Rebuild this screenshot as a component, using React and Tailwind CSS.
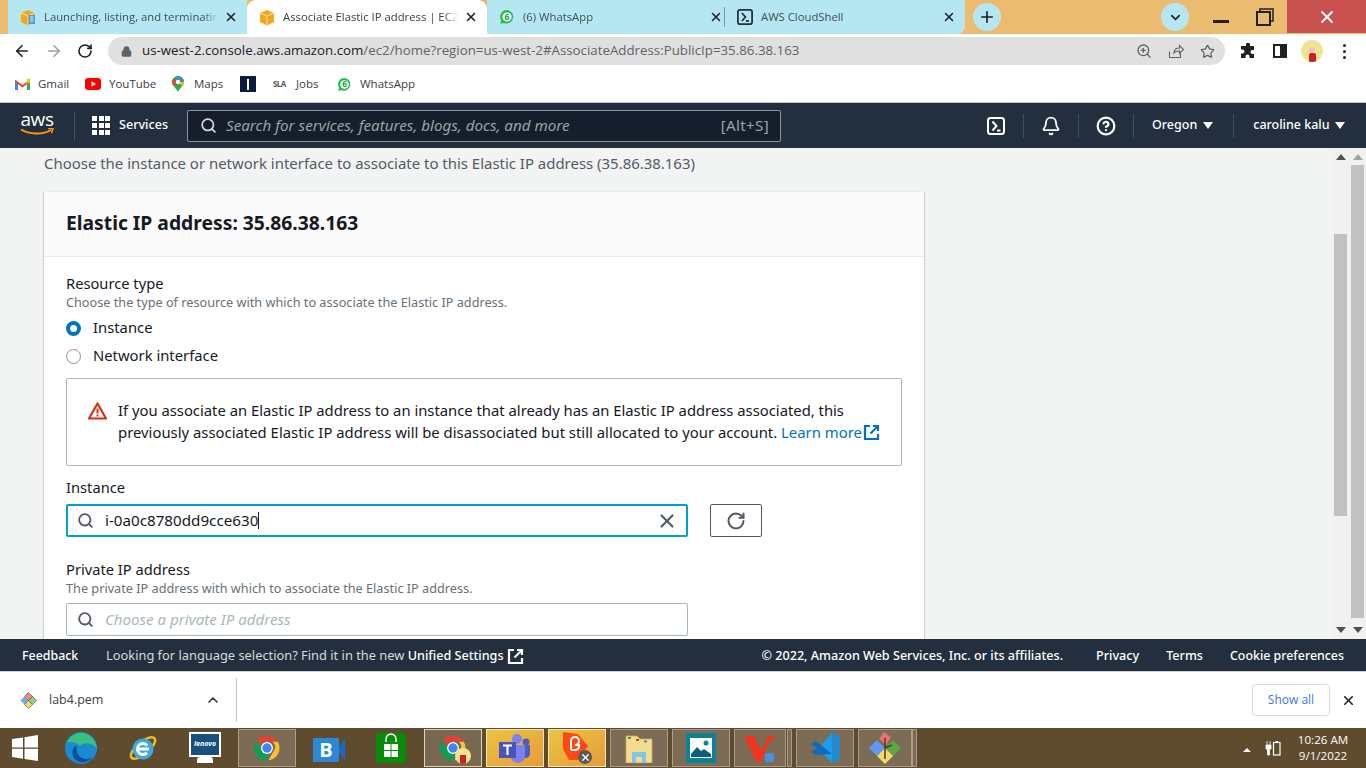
import React from 'react';
import { ArrowLeft, ArrowRight, RotateCw, Lock, X, Plus, ChevronDown, ChevronUp, Search, ZoomIn, Star, Bell, CircleHelp } from 'lucide-react';

const Chrome = ({ size = 30 }) => (
    <svg width={size} height={size} viewBox="0 0 48 48">
        <path d="M24 4a20 20 0 0 1 17.3 10H24a10 10 0 0 0-9.4 6.6L7.6 11.8A20 20 0 0 1 24 4z" fill="#db4437" />
        <path d="M41.3 14A20 20 0 0 1 26 43.9l8.6-14.9A10 10 0 0 0 33 14z" fill="#fbc02d" />
        <path d="M26 43.9A20 20 0 0 1 7.6 11.8l8.6 14.9a10 10 0 0 0 9 7.2z" fill="#0f9d58" />
        <circle cx="24" cy="24" r="9.5" fill="#fff" />
        <circle cx="24" cy="24" r="7.5" fill="#4285f4" />
    </svg>
);

const WhatsAppIcon = ({ size = 16 }) => (
    <svg width={size} height={size} viewBox="0 0 16 16">
        <path d="M8 1a6.8 6.8 0 0 0-5.8 10.4L1.4 15l3.5-.9A6.8 6.8 0 1 0 8 1z" fill="#1fc24f" />
        <circle cx="8" cy="8" r="4.6" fill="#fff" />
        <text x="8" y="11" textAnchor="middle" fontSize="8.5" fontWeight="700" fill="#1a9c40" fontFamily="Open Sans, sans-serif">6</text>
    </svg>
);

const AwsBox = ({ doc }) => (
    <svg width="16" height="17" viewBox="0 0 16 17">
        <path d="M8 1l7 3v9l-7 3.5L1 13V4z" fill="#f3a81c" />
        <path d="M1 4l7 3 7-3M8 7v9.5" fill="none" stroke="#fff" strokeWidth=".7" />
        {doc && <rect x="8.5" y="6" width="6.5" height="9" fill="#4b9fd5" />}
        {doc && <path d="M10 8h3.5M10 10h3.5M10 12h3.5" stroke="#fff" strokeWidth=".8" />}
    </svg>
);

const ShellIcon = ({ size = 18, color = '#232f3e' }) => (
    <svg width={size} height={size} viewBox="0 0 18 18">
        <rect x="1" y="1" width="16" height="16" rx="2.5" fill="none" stroke={color} strokeWidth="2" />
        <path d="M5.5 4.5L9.5 9l-4 4.5" fill="none" stroke={color} strokeWidth="2" />
        <path d="M10 13.5h3.5" stroke={color} strokeWidth="2" />
    </svg>
);

const ExternalIcon = ({ className }) => (
    <svg className={className} width="17" height="17" viewBox="0 0 17 17">
        <path d="M7 2H2v13h13v-5" fill="none" stroke="currentColor" strokeWidth="2.2" />
        <path d="M10 2h5v5M15 2L7.5 9.5" fill="none" stroke="currentColor" strokeWidth="2.2" />
    </svg>
);

const Tab = ({ icon, title, active, width, divider }) => (
    <div className={`${width} h-[34px] shrink-0 flex items-center pl-[12px] pr-[9px] ${active ? 'bg-white rounded-t-[9px]' : 'bg-[#b5e7f2]'}`}>
        <div className="w-[16px] h-[17px] flex items-center justify-center shrink-0">{icon}</div>
        <span className={`ml-[8px] flex-1 overflow-hidden whitespace-nowrap text-[11.3px] [mask-image:linear-gradient(to_right,black_92%,transparent)] ${active ? 'text-[#3c4043]' : 'text-[#3f5055]'}`}>{title}</span>
        <X className="ml-[6px] shrink-0 text-[#202124]" size={14} strokeWidth={2.6} />
        {divider && <div className="ml-[1px] -mr-[9px] w-px h-[20px] bg-[#7d9aa1]" />}
    </div>
);

const Bookmark = ({ icon, label, width }) => (
    <div className={`${width} flex items-center shrink-0`}>
        {icon}
        {label && <span className="text-[11.5px] text-[#3c4043] whitespace-nowrap">{label}</span>}
    </div>
);

const TaskSlot = ({ children, kind = 'none', width = 'w-[58px]' }) => {
    const styles = {
        none: '',
        open: 'bg-[#7c6c56] border border-[#a99c88]',
        bright: 'bg-[#77684f] border border-[#dcd5c8]',
        hot: 'bg-gradient-to-br from-[#e8c53f] to-[#e89a3c] border border-[#f4e6bd]',
    };
    return <div className={`${width} h-[38px] mt-px flex items-center justify-center shrink-0 ${styles[kind]}`}>{children}</div>;
};

const ScrollBar = ({ topSpace, thumb, topArrow }) => (
    <div className="w-[13px] h-full flex flex-col items-center">
        <div className={`w-0 h-0 border-x-[5px] border-x-transparent border-b-[6px] mt-[6px] ${topArrow}`} />
        <div className={`${topSpace} w-0`} />
        <div className={`${thumb} w-[13px] bg-[#c1c1c1]`} />
        <div className="flex-1" />
        <div className="w-0 h-0 border-x-[5px] border-x-transparent border-t-[6px] border-t-[#505050] mb-[6px]" />
    </div>
);

const AwsField = ({ children, className }) => (
    <div className={`w-[622px] h-[33px] flex items-center bg-white rounded-[2px] ${className}`}>{children}</div>
);

const App = () => {
    return (
        <div className="w-[1366px] h-[768px] flex flex-col overflow-hidden bg-white font-['Noto_Sans',sans-serif]">
            {/* Tab strip */}
            <div className="h-[34px] flex bg-[#ebbb6f] shrink-0 font-['Open_Sans',sans-serif]">
                <div className="w-[8px] shrink-0" />
                <Tab width="w-[239px]" icon={<AwsBox doc />} title="Launching, listing, and terminating" />
                <Tab width="w-[240px]" active icon={<AwsBox />} title="Associate Elastic IP address | EC2" />
                <Tab width="w-[238px]" divider icon={<WhatsAppIcon />} title="(6) WhatsApp" />
                <div className="w-[240px] h-[34px] shrink-0 flex items-center pl-[12px] pr-[9px] bg-[#b5e7f2] rounded-br-[8px]">
                    <ShellIcon size={16} />
                    <span className="ml-[8px] flex-1 text-[11.3px] text-[#3f5055] whitespace-nowrap">AWS CloudShell</span>
                    <X size={14} strokeWidth={2.6} className="text-[#202124]" />
                </div>
                <div className="ml-[8px] mt-[3px] w-[28px] h-[28px] shrink-0 rounded-full bg-[#b5e7f2] flex items-center justify-center">
                    <Plus size={18} strokeWidth={2.2} className="text-[#202124]" />
                </div>
                <div className="ml-[160px] mt-[3px] w-[28px] h-[28px] shrink-0 rounded-full bg-[#b5e7f2] flex items-center justify-center">
                    <ChevronDown size={15} strokeWidth={2.6} className="text-[#202124]" />
                </div>
                <div className="w-[16px] h-[3px] mt-[20px] bg-[#202124] ml-[24px] shrink-0" />
                <svg className="ml-[27px] mt-[8px] shrink-0" width="18" height="18" viewBox="0 0 18 18">
                    <path d="M4 4V1h13v12h-3" fill="none" stroke="#202124" strokeWidth="1.5" />
                    <rect x="1" y="4" width="13" height="13" fill="none" stroke="#202124" strokeWidth="2" />
                </svg>
                <div className="ml-[13px] w-[79px] h-[33px] shrink-0 bg-[#c9514f] flex items-center justify-center">
                    <X size={20} strokeWidth={2.2} className="text-white" />
                </div>
            </div>

            {/* Address bar */}
            <div className="h-[34px] flex items-center bg-white shrink-0 font-['Open_Sans',sans-serif]">
                <ArrowLeft className="ml-[13px] text-[#202124]" size={18} strokeWidth={2.2} />
                <ArrowRight className="ml-[14px] text-[#9aa0a6]" size={18} strokeWidth={2.2} />
                <RotateCw className="ml-[14px] text-[#202124]" size={16} strokeWidth={2.4} />
                <div className="ml-[15px] w-[1117px] h-[28px] rounded-full bg-[#e0e0e0] flex items-center">
                    <Lock className="ml-[13px] text-[#5f6368]" size={11} strokeWidth={3} fill="#5f6368" />
                    <span className="ml-[10px] text-[13.3px] text-[#5f6368] whitespace-nowrap flex-1">
                        <span className="text-[#202124]">us-west-2.console.aws.amazon.com</span>/ec2/home?region=us-west-2#AssociateAddress:PublicIp=35.86.38.163
                    </span>
                    <ZoomIn className="text-[#5f6368]" size={16} />
                    <svg className="ml-[16px]" width="16" height="16" viewBox="0 0 16 16">
                        <path d="M1.5 8.5v6h11v-4M6 10c0-3.5 2-5 5.5-5V2.5l4 4-4 4V8C9 8 7 8.5 6 10z" fill="none" stroke="#5f6368" strokeWidth="1.1" />
                    </svg>
                    <Star className="ml-[16px] mr-[10px] text-[#5f6368]" size={15} strokeWidth={2} />
                </div>
                <svg className="ml-[15px]" width="16" height="16" viewBox="0 0 16 16">
                    <path d="M6 1.5a2 2 0 0 1 4 0V3h4v4h-1.5a2 2 0 0 0 0 4H14v4H9.5v-1.5a2 2 0 0 0-4 0V15H1v-4.5h1.5a2 2 0 0 0 0-4H1V3h5z" fill="#202124" />
                </svg>
                <div className="ml-[17px] w-[14px] h-[14px] border-2 border-[#202124] flex justify-end">
                    <div className="w-[5px] h-full bg-[#202124]" />
                </div>
                <div className="ml-[14px] w-[22px] h-[22px] rounded-full bg-[#efe58f] flex flex-col items-center justify-end overflow-hidden">
                    <div className="w-[6px] h-[6px] rounded-full bg-[#e8c4c4]" />
                    <div className="w-[7px] h-[9px] bg-[#c9202a] rounded-t-[2px]" />
                </div>
                <div className="ml-[20px] flex flex-col gap-[3px]">
                    <div className="w-[3px] h-[3px] rounded-full bg-[#202124]" />
                    <div className="w-[3px] h-[3px] rounded-full bg-[#202124]" />
                    <div className="w-[3px] h-[3px] rounded-full bg-[#202124]" />
                </div>
            </div>

            {/* Bookmarks */}
            <div className="h-[35px] flex items-center pl-[15px] pb-[2px] bg-white border-b border-[#c4c4c4] shrink-0 font-['Open_Sans',sans-serif]">
                <Bookmark width="w-[70px]" label="Gmail" icon={
                    <svg className="mr-[8px]" width="15" height="12" viewBox="0 0 15 12">
                        <path d="M0 2v10h3V4.5z" fill="#4285f4" />
                        <path d="M15 2v10h-3V4.5z" fill="#34a853" />
                        <path d="M0 1.5l7.5 5.5L15 1.5V4L7.5 9.5 0 4z" fill="#ea4335" />
                        <path d="M12 1l3-.5V4l-3 2.2z" fill="#fbbc04" />
                    </svg>
                } />
                <Bookmark width="w-[87px]" label="YouTube" icon={
                    <svg className="mr-[8px]" width="16" height="12" viewBox="0 0 16 12">
                        <rect width="16" height="12" rx="3" fill="#f00" />
                        <path d="M6.5 3.2v5.6L11 6z" fill="#fff" />
                    </svg>
                } />
                <Bookmark width="w-[68px]" label="Maps" icon={
                    <svg className="mr-[10px]" width="12" height="16" viewBox="0 0 12 16">
                        <path d="M6 0a6 6 0 0 1 6 6c0 3.5-4 6-6 10-2-4-6-6.5-6-10a6 6 0 0 1 6-6z" fill="#34a853" />
                        <path d="M1 2.7L6 6 2 10C.8 8.5 0 7.3 0 6c0-1.3.4-2.4 1-3.3z" fill="#ea4335" />
                        <path d="M6 0a6 6 0 0 1 6 6L8 4 4 .4C4.6.1 5.3 0 6 0z" fill="#4285f4" />
                        <path d="M12 6c0 1.5-1 3-2 4L6 6z" fill="#fbbc04" />
                        <circle cx="6" cy="6" r="2.2" fill="#fff" />
                    </svg>
                } />
                <Bookmark width="w-[33px]" icon={
                    <div className="w-[16px] h-[16px] bg-[#0b1b3a] flex items-center justify-center">
                        <div className="w-[2px] h-[11px] bg-white" />
                    </div>
                } />
                <Bookmark width="w-[64px]" label="Jobs" icon={
                    <span className="w-[23px] text-[8px] font-bold text-[#555] tracking-[-0.08em]">SLA</span>
                } />
                <Bookmark width="w-[90px]" label="WhatsApp" icon={
                    <span className="mr-[8px] flex"><WhatsAppIcon size={15} /></span>
                } />
            </div>

            {/* AWS console nav */}
            <div className="h-[45px] flex items-center bg-[#232f3e] text-white shrink-0">
                <div className="ml-[20px] w-[34px] flex flex-col items-center">
                    <span className="text-[19px] leading-[16px] font-['Open_Sans',sans-serif] tracking-[-0.02em] -mt-[5px]">aws</span>
                    <svg className="mt-[1px]" width="34" height="8" viewBox="0 0 34 8">
                        <path d="M1 1.5c8 5 22 5.5 30 .5" fill="none" stroke="#f90" strokeWidth="2" />
                        <path d="M28 .5h5l-1.5 4.5" fill="none" stroke="#f90" strokeWidth="1.5" />
                    </svg>
                </div>
                <div className="ml-[20px] w-px h-[30px] bg-[#414d5c]" />
                <div className="ml-[17px] w-[18px] grid grid-cols-3 gap-[2px]">
                    {[0, 1, 2, 3, 4, 5, 6, 7, 8].map((i) => <div key={i} className="w-[5px] h-[5px] bg-white" />)}
                </div>
                <span className="ml-[9px] w-[68px] text-[12.6px] font-medium">Services</span>
                <div className="w-[594px] h-[32px] flex items-center bg-[#161e2d] border border-[#879596] rounded-[2px]">
                    <Search className="ml-[12px] text-[#d5dbdb]" size={17} strokeWidth={2.4} />
                    <span className="ml-[9px] flex-1 text-[15.2px] italic text-[#95a5a6] whitespace-nowrap">Search for services, features, blogs, docs, and more</span>
                    <span className="mr-[11px] text-[15.2px] tracking-[0.02em] text-[#95a5a6]">[Alt+S]</span>
                </div>
                <div className="ml-[206px] flex"><ShellIcon color="#fff" /></div>
                <div className="ml-[18px] w-px h-[24px] bg-[#414d5c]" />
                <Bell className="ml-[17px]" size={20} strokeWidth={2.2} />
                <div className="ml-[17px] w-px h-[24px] bg-[#414d5c]" />
                <CircleHelp className="ml-[17px]" size={20} strokeWidth={2.6} />
                <div className="ml-[17px] w-px h-[24px] bg-[#414d5c]" />
                <span className="ml-[18px] text-[12.5px] font-medium">Oregon</span>
                <div className="ml-[6px] w-0 h-0 border-x-[5px] border-x-transparent border-t-[7px] border-t-white" />
                <div className="ml-[20px] w-px h-[24px] bg-[#414d5c]" />
                <span className="ml-[19px] text-[12.5px] font-medium whitespace-nowrap">caroline kalu</span>
                <div className="ml-[5px] w-0 h-0 border-x-[5px] border-x-transparent border-t-[7px] border-t-white" />
            </div>

            {/* Console content + scrollbars */}
            <div className="h-[491px] flex bg-[#f2f3f3] shrink-0 overflow-hidden">
                <div className="w-[1332px] shrink-0 pl-[44px] pt-[5px] overflow-hidden">
                    <p className="h-[20px] leading-[20px] text-[14.95px] text-[#545b64] whitespace-nowrap">Choose the instance or network interface to associate to this Elastic IP address (35.86.38.163)</p>
                    <div className="mt-[18px] w-[880px] bg-white rounded-[1px] border-t border-[#eaeded] shadow-[0_1px_1px_0_rgba(0,28,36,0.3),1px_1px_1px_0_rgba(0,28,36,0.15),-1px_1px_1px_0_rgba(0,28,36,0.15)]">
                        <div className="h-[65px] flex items-center px-[22px] pb-[2px] bg-[#fafafa] border-b border-[#eaeded]">
                            <h2 className="text-[19.3px] font-bold text-[#16191f]">Elastic IP address: 35.86.38.163</h2>
                        </div>
                        <div className="px-[22px] pt-[16px] pb-[20px] w-[880px]">
                            <div className="h-[20px] leading-[20px] text-[14.7px] text-[#16191f]">Resource type</div>
                            <div className="h-[16px] leading-[16px] text-[12.7px] text-[#687078] mt-[1px]">Choose the type of resource with which to associate the Elastic IP address.</div>
                            <div className="mt-[4px] h-[28px] flex items-center text-[14.8px] leading-[20px] text-[#16191f]">
                                <div className="w-[15px] h-[15px] rounded-full border-[4px] border-[#0073bb] bg-white" />
                                <span className="ml-[12px] -mt-[2px]">Instance</span>
                            </div>
                            <div className="h-[28px] flex items-center text-[14.8px] leading-[20px] text-[#16191f]">
                                <div className="w-[15px] h-[15px] rounded-full border border-[#879596] bg-white" />
                                <span className="ml-[12px] -mt-[2px]">Network interface</span>
                            </div>
                            <div className="mt-[8px] h-[88px] w-[836px] flex items-start pl-[21px] pt-[20px] border border-[#aab7b8] rounded-[2px]">
                                <svg className="mt-[3px] shrink-0" width="19" height="18" viewBox="0 0 19 18">
                                    <path d="M9.5 1.5L18 16.5H1z" fill="none" stroke="#d13212" strokeWidth="2.2" strokeLinejoin="round" />
                                    <path d="M9.5 6.5v5M9.5 12.5v2" stroke="#d13212" strokeWidth="2" />
                                </svg>
                                <p className="ml-[11px] text-[14.8px] leading-[22px] text-[#16191f] whitespace-nowrap">
                                    If you associate an Elastic IP address to an instance that already has an Elastic IP address associated, this<br />
                                    <span className="text-[14.86px]">previously associated Elastic IP address will be disassociated but still allocated to your account. <span className="text-[#0073bb]">Learn more</span></span>
                                    <ExternalIcon className="inline-block -mt-[3px] ml-px text-[#0073bb]" />
                                </p>
                            </div>
                            <div className="mt-[11px] h-[20px] leading-[20px] text-[14.7px] text-[#16191f]">Instance</div>
                            <div className="mt-[7px] flex">
                                <AwsField className="border-2 border-[#00a1c9]">
                                    <Search className="ml-[9px] text-[#545b64]" size={17} strokeWidth={2.6} />
                                    <span className="ml-[11px] text-[15.2px] text-[#16191f]">i-0a0c8780dd9cce630</span>
                                    <div className="w-px h-[17px] bg-[#16191f]" />
                                    <div className="flex-1" />
                                    <X className="mr-[8px] text-[#545b64]" size={22} strokeWidth={2.4} />
                                </AwsField>
                                <div className="ml-[22px] w-[52px] h-[33px] flex items-center justify-center border border-[#545b64] rounded-[2px]">
                                    <RotateCw className="text-[#545b64]" size={20} strokeWidth={2.4} />
                                </div>
                            </div>
                            <div className="mt-[22px] h-[20px] leading-[20px] text-[14.7px] text-[#16191f]">Private IP address</div>
                            <div className="h-[16px] leading-[16px] text-[12.7px] text-[#687078] mt-[1px]">The private IP address with which to associate the Elastic IP address.</div>
                            <AwsField className="mt-[7px] border border-[#aab7b8]">
                                <Search className="ml-[10px] text-[#545b64]" size={17} strokeWidth={2.6} />
                                <span className="ml-[11px] text-[15.1px] italic text-[#aab7b8]">Choose a private IP address</span>
                            </AwsField>
                        </div>
                    </div>
                </div>
                <div className="flex-1 flex bg-[#f1f1f1] pl-[2px] gap-[4px]">
                    <ScrollBar topSpace="h-[74px]" thumb="h-[282px]" topArrow="border-b-[#505050]" />
                    <ScrollBar topSpace="h-[5px]" thumb="h-[453px]" topArrow="border-b-[#a3a3a3]" />
                </div>
            </div>

            {/* Console footer */}
            <div className="h-[32px] pt-[2px] flex items-center bg-[#232f3e] text-[12.6px] text-white shrink-0 whitespace-nowrap">
                <span className="ml-[22px] w-[84px] text-[12.4px] font-medium">Feedback</span>
                <span className="text-[12.85px] text-[#d5dbdb]">Looking for language selection? Find it in the new <span className="text-[12.6px] text-white font-medium">Unified Settings</span></span>
                <ExternalIcon className="ml-[3px]" />
                <span className="ml-[238px] font-medium">© 2022, Amazon Web Services, Inc. or its affiliates.</span>
                <span className="ml-[33px] font-medium">Privacy</span>
                <span className="ml-[27px] font-medium">Terms</span>
                <span className="ml-[27px] text-[12.4px] font-medium">Cookie preferences</span>
            </div>

            {/* Downloads bar */}
            <div className="h-[57px] flex items-center bg-white border-t border-[#d0d0d0] shrink-0 font-['Open_Sans',sans-serif]">
                <svg className="ml-[20px]" width="17" height="17" viewBox="0 0 17 17">
                    <path d="M8.5.5l4 4-4 4-4-4z" fill="#f08a8a" stroke="#333" strokeWidth=".5" />
                    <path d="M12.5 4.5l4 4-4 4-4-4z" fill="#8ed27a" stroke="#333" strokeWidth=".5" />
                    <path d="M4.5 4.5l4 4-4 4-4-4z" fill="#6ea8f5" />
                    <path d="M8.5 8.5l4 4-4 4-4-4z" fill="#f6d866" stroke="#333" strokeWidth=".5" />
                </svg>
                <span className="ml-[12px] w-[156px] text-[12.5px] text-[#3c4043]">lab4.pem</span>
                <ChevronUp size={16} strokeWidth={2.6} className="text-[#3c4043]" />
                <div className="ml-[15px] w-px h-[44px] bg-[#c4c4c4]" />
                <div className="flex-1" />
                <div className="w-[78px] h-[32px] flex items-center justify-center border border-[#dadce0] rounded-[4px] text-[12px] text-[#3b78e7]">Show all</div>
                <X className="ml-[11px] mr-[10px] text-[#202124]" size={15} strokeWidth={2.6} />
            </div>

            {/* Windows taskbar */}
            <div className="h-[40px] flex bg-[#5f4b2d] shrink-0">
                <svg className="ml-[12px] mt-[7px] shrink-0" width="26" height="26" viewBox="0 0 26 26">
                    <path d="M0 4l11-1.5v10H0zM12.5 2.200L26 0v12.5H12.5zM0 13.800h11v10L0 22zM12.5 13.800H26V26l-13.500-2z" fill="#fff" />
                </svg>
                <svg className="ml-[27px] mt-[4px] shrink-0" width="32" height="32" viewBox="0 0 32 32">
                    <circle cx="16" cy="16" r="16" fill="#1b8bd1" />
                    <path d="M2 10C6 2 14 0 20 1.5c7 2 11 8 12 15-4-5-12-7-17-3-3-3-9-4-13-3.5z" fill="#39c27f" />
                    <path d="M12 14c-2 7 3 13 10 13 2 0 4-.5 6-2-3 4-8 6-13 5-6-1-9-8-7-13 1-2 2-3 4-3z" fill="#0f4f9c" />
                </svg>
                <svg className="ml-[31px] mt-[4px] shrink-0" width="30" height="32" viewBox="0 0 30 32">
                    <ellipse cx="15" cy="16" rx="15" ry="6" transform="rotate(-40 15 16)" fill="none" stroke="#f0bd23" strokeWidth="2.5" />
                    <circle cx="15" cy="17" r="10.5" fill="#3aa9e6" />
                    <rect x="9" y="15.5" width="12" height="3" fill="#fff" />
                    <circle cx="15" cy="17" r="5.5" fill="none" stroke="#fff" strokeWidth="3" strokeDasharray="26 9" strokeDashoffset="-4" />
                </svg>
                <div className="ml-[31px] w-[32px] mt-[4px] flex flex-col items-center shrink-0">
                    <div className="w-[32px] h-[25px] bg-[#15507f] border-[2px] border-white flex items-center justify-center">
                        <span className="text-[7px] italic font-bold text-white font-['Open_Sans',sans-serif]">lenovo</span>
                    </div>
                    <div className="w-[16px] h-[6px] bg-white rounded-t-[3px]" />
                </div>
                <div className="w-[17px] shrink-0" />
                <TaskSlot kind="open"><Chrome /></TaskSlot>
                <div className="ml-[17px] w-[32px] h-[27px] mt-[8px] flex items-center shrink-0">
                    <div className="w-[26px] h-[24px] bg-[#2b88d8] flex items-center justify-center text-white text-[20px] font-bold leading-none font-['Open_Sans',sans-serif]">B</div>
                    <div className="w-[6px] h-[22px] bg-[#1769c2] [clip-path:polygon(0_40%,100%_0,100%_100%,0_60%)]" />
                </div>
                <svg className="ml-[31px] mt-[5px] shrink-0" width="30" height="30" viewBox="0 0 30 30">
                    <rect width="30" height="30" fill="#0a8a0a" />
                    <path d="M10 9V6a5 5 0 0 1 10 0v3" fill="none" stroke="#fff" strokeWidth="1.4" />
                    <path d="M8 11h6.5v6H8zM15.5 11H22v6h-6.5zM8 18h6.5v6H8zM15.5 18H22v6h-6.5z" fill="#fff" />
                </svg>
                <div className="w-[18px] shrink-0" />
                <TaskSlot kind="bright">
                    <div className="relative w-[30px] h-[30px]">
                        <Chrome />
                        <div className="absolute -right-[3px] -bottom-[1px] w-[16px] h-[16px] rounded-full bg-[#efe58f] flex items-end justify-center overflow-hidden">
                            <div className="w-[6px] h-[9px] bg-[#c9202a]" />
                        </div>
                    </div>
                </TaskSlot>
                <div className="w-[4px] shrink-0" />
                <TaskSlot kind="hot">
                    <svg width="32" height="30" viewBox="0 0 32 30">
                        <circle cx="18" cy="6" r="5" fill="#7b83eb" />
                        <circle cx="27" cy="9" r="3.5" fill="#4f5bbd" />
                        <path d="M22 12h9v9a5 5 0 0 1-9 2z" fill="#4f5bbd" />
                        <path d="M10 12h16v11a7 7 0 0 1-14 0z" fill="#7b83eb" />
                        <rect x="0" y="9" width="17" height="16" fill="#4b53bc" />
                        <path d="M4 12.5h9M8.5 12.5V22" stroke="#fff" strokeWidth="2.2" />
                    </svg>
                </TaskSlot>
                <div className="w-[4px] shrink-0" />
                <TaskSlot kind="hot">
                    <div className="relative w-[30px] h-[32px]">
                        <svg width="28" height="28" viewBox="0 0 28 28">
                            <path d="M1 0l15 2 10 12-10 14H7L1 17z" fill="#fb4a14" />
                            <path d="M9 18V9a4 4 0 0 1 8 0 4 4 0 0 1-4 4h4a4 4 0 0 1-4 5H9" fill="none" stroke="#fff" strokeWidth="2" />
                        </svg>
                        <div className="absolute right-0 bottom-0 w-[14px] h-[14px] rounded-full bg-[#5a5a5a] flex items-center justify-center">
                            <X size={11} strokeWidth={3} className="text-white" />
                        </div>
                    </div>
                </TaskSlot>
                <div className="w-[4px] shrink-0" />
                <TaskSlot kind="open">
                    <svg width="28" height="30" viewBox="0 0 28 30">
                        <path d="M1 3h11l3 3h12v24H1z" fill="#f4dc8f" stroke="#c9ad62" strokeWidth=".8" />
                        <rect x="3" y="4" width="3" height="1.8" fill="#1aa53c" />
                        <rect x="11" y="6" width="3" height="1.8" fill="#d13212" />
                        <rect x="19" y="7.5" width="3" height="1.8" fill="#2b88d8" />
                        <path d="M7 30V19h14v11h-4v-6h-6v6z" fill="#7fc4ea" />
                    </svg>
                </TaskSlot>
                <div className="w-[4px] shrink-0" />
                <TaskSlot kind="open">
                    <div className="w-[30px] h-[30px] bg-[#0b8299] flex items-center justify-center">
                        <svg width="22" height="20" viewBox="0 0 22 20">
                            <rect width="22" height="20" fill="#fff" />
                            <path d="M1 16l6-7 4 4 3-2 7 5v3H1z" fill="#0b5f7d" />
                            <circle cx="16" cy="5" r="2.5" fill="#0b8299" />
                        </svg>
                    </div>
                </TaskSlot>
                <div className="w-[4px] shrink-0" />
                <TaskSlot kind="open" width="w-[52px]">
                    <svg width="32" height="28" viewBox="0 0 32 28">
                        <path d="M0 2h11l5 14 4-14h12l-8 8-7 18h-5z" fill="#f0341f" />
                        <path d="M11 2h13l-4 9-4 5z" fill="#7c6c56" />
                        <rect x="21" y="19" width="9" height="9" rx="2" fill="#4a90e2" />
                    </svg>
                </TaskSlot>
                <TaskSlot kind="open" width="w-[5px] ml-[1px]" />
                <div className="w-[4px] shrink-0" />
                <TaskSlot kind="open">
                    <svg width="32" height="32" viewBox="0 0 32 32">
                        <path d="M23 1l8 4v22l-8 4L9 17z" fill="#1f9cf0" />
                        <path d="M23 1v30l8-4V5z" fill="#2489ca" />
                        <path d="M23 22L7 9 2 12l6 4-6 4 5 3z" fill="#0f6cbd" />
                    </svg>
                </TaskSlot>
                <div className="w-[4px] shrink-0" />
                <TaskSlot kind="open" width="w-[54px]">
                    <svg width="32" height="32" viewBox="0 0 32 32">
                        <path d="M16 0l6 6-6 7-6-7z" fill="#f06e6e" transform="rotate(-10 16 6)" />
                        <path d="M24 8l8 8-8 8-8-8z" fill="#5aa845" />
                        <path d="M8 8l8 8-8 8-8-8z" fill="#5b9bf5" />
                        <path d="M16 16l8 8-8 8-8-8z" fill="#f6d866" />
                        <path d="M16 6v21M16 16l7-3" stroke="#4a3d2c" strokeWidth="1.5" />
                    </svg>
                </TaskSlot>
                <TaskSlot kind="open" width="w-[5px]" />
                <div className="flex-1" />
                <div className="w-0 h-0 mt-[20px] border-x-[4px] border-x-transparent border-b-[4px] border-b-white" />
                <svg className="ml-[14px] mt-[12px] shrink-0" width="16" height="16" viewBox="0 0 16 16">
                    <path d="M2 1v4M5 1v4M1 5h5v4H4.5v6h-2V9H1z" fill="#fff" stroke="#fff" strokeWidth=".8" />
                    <rect x="8.5" y="2.5" width="6.5" height="12.5" fill="none" stroke="#fff" strokeWidth="1.2" />
                    <rect x="10.5" y="1" width="2.5" height="1.5" fill="#fff" />
                </svg>
                <div className="ml-[17px] mr-[18px] w-[50px] flex flex-col justify-center items-center text-[11.6px] leading-[16px] text-white whitespace-nowrap font-['Open_Sans',sans-serif]">
                    <span>10:26 AM</span>
                    <span>9/1/2022</span>
                </div>
            </div>
        </div>
    );
};

export default App;
